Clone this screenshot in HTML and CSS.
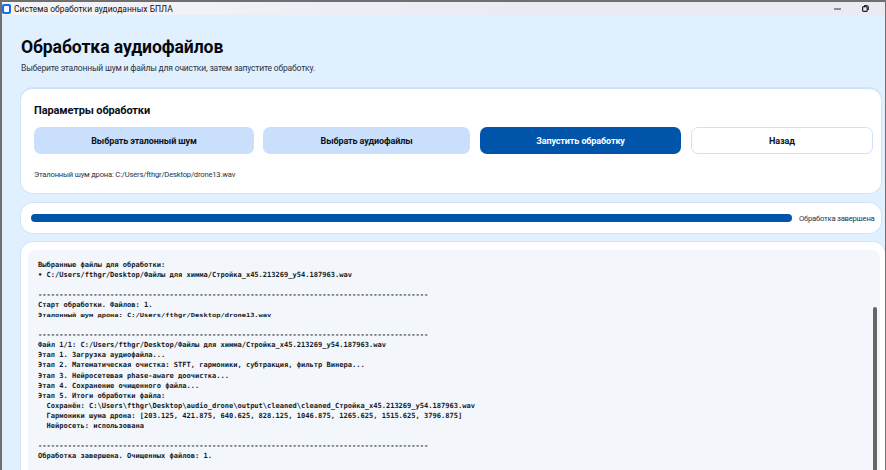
FILE: index.html
```html
<!DOCTYPE html>
<html lang="ru">
<head>
<meta charset="utf-8">
<title>Система обработки аудиоданных БПЛА</title>
<link rel="stylesheet" href="styles.css">
</head>
<body>
<div class="window">
  <header class="titlebar">
    <svg class="app-icon" width="9" height="10" viewBox="0 0 9 10"><rect x="0" y="0" width="9" height="10" rx="2" fill="#1a6fe0"/><rect x="2" y="2" width="5" height="6" rx="1" fill="#fff"/></svg>
    <span class="app-title">Система обработки аудиоданных БПЛА</span>
    <div class="win-controls">
      <svg width="7" height="2" viewBox="0 0 7 2"><rect width="7" height="1" y="0.5" fill="#333"/></svg>
      <svg width="7" height="7" viewBox="0 0 7 7"><rect x="0.6" y="1.6" width="4.6" height="4.8" rx="1" fill="none" stroke="#222" stroke-width="1.2"/><path d="M2 .6h3.4a1 1 0 0 1 1 1V5" fill="none" stroke="#222"/></svg>
    </div>
  </header>
  <main class="content">
    <h1 class="page-title">Обработка аудиофайлов</h1>
    <p class="page-sub">Выберите эталонный шум и файлы для очистки, затем запустите обработку.</p>
    <section class="card params">
      <h2 class="card-title">Параметры обработки</h2>
      <div class="buttons">
        <button class="btn btn-light b1">Выбрать эталонный шум</button>
        <button class="btn btn-light b2">Выбрать аудиофайлы</button>
        <button class="btn btn-primary b3">Запустить обработку</button>
        <button class="btn btn-ghost b4">Назад</button>
      </div>
      <p class="noise-path">Эталонный шум дрона: C:/Users/fthgr/Desktop/drone13.wav</p>
    </section>
    <section class="card progress-card">
      <div class="bar"></div>
      <span class="status">Обработка завершена</span>
    </section>
    <section class="card log-card">
      <div class="log-box">
<pre class="log">Выбранные файлы для обработки:
• C:/Users/fthgr/Desktop/Файлы для химма/Стройка_x45.213269_y54.187963.wav

--------------------------------------------------------------------------------------------
Старт обработки. Файлов: 1.
<span class="squash">Эталонный шум дрона: C:/Users/fthgr/Desktop/drone13.wav</span>

--------------------------------------------------------------------------------------------
Файл 1/1: C:/Users/fthgr/Desktop/Файлы для химма/Стройка_x45.213269_y54.187963.wav
Этап 1. Загрузка аудиофайла...
Этап 2. Математическая очистка: STFT, гармоники, субтракция, фильтр Винера...
Этап 3. Нейросетевая phase-aware доочистка...
Этап 4. Сохранение очищенного файла...
Этап 5. Итоги обработки файла:
  Сохранён: C:\Users\fthgr\Desktop\audio_drone\output\cleaned\cleaned_Стройка_x45.213269_y54.187963.wav
  Гармоники шума дрона: [203.125, 421.875, 640.625, 828.125, 1046.875, 1265.625, 1515.625, 3796.875]
  Нейросеть: использована

--------------------------------------------------------------------------------------------
Обработка завершена. Очищенных файлов: 1.</pre>
        <div class="scrollbar"></div>
      </div>
    </section>
  </main>
</div>
</body>
</html>
```
FILE: styles.css
```css
* { box-sizing: border-box; }
html, body { margin: 0; height: 100%; overflow: hidden; }
body { font-family: Roboto, "Noto Sans", sans-serif; color: #0b1220; background: #fff; }
.window {
  width: 886px; height: 470px; display: flex; flex-direction: column;
  border-top: 2px solid #6f6f6f; border-left: 2px solid #6f6f6f; border-right: 1px solid #6f6f6f;
  overflow: hidden; background: #e1f0fe;
}
.titlebar {
  height: 13px; flex: none; display: flex; align-items: center;
  background: linear-gradient(90deg, #f4f5f9, #e8ebf4 60%);
}
.app-icon { flex: none; }
.app-title { margin-left: 3px; font-size: 8.5px; color: #111; white-space: nowrap; }
.win-controls { margin-left: auto; display: flex; align-items: center; gap: 21px; padding-right: 16px; }
.content { flex: 1; min-height: 0; padding: 0 0 0 19px; overflow: hidden; }
.page-title { margin: 21px 0 0; font-size: 17.6px; line-height: 22px; font-weight: 700; color: #060a12; letter-spacing: -0.1px; }
.page-sub { margin: 4px 0 0; font-size: 8.5px; line-height: 13px; color: #2a3446; letter-spacing: -0.17px; }
.card { background: #fff; border-radius: 12px; width: 860px; box-shadow: 0 0 0 1px #d2e4fb; }
.params { margin-top: 13px; height: 105px; padding: 15px 8px 0 13px; border-top: 1px solid #cde2fb; }
.card-title { margin: 0; font-size: 11px; line-height: 14px; font-weight: 700; color: #0a0f18; letter-spacing: -0.13px; }
.buttons { display: flex; margin-top: 9px; height: 27px; }
.btn {
  height: 27px; border-radius: 7px; border: 0; font-family: inherit; font-size: 9px; font-weight: 700;
  color: #0b1220; padding: 0; letter-spacing: -0.1px;
}
.btn-light { background: #c9dffb; }
.btn-primary { background: #0054aa; color: #fff; }
.btn-ghost { background: #fff; border: 1px solid #cfe2fb; }
.b1 { width: 220px; }
.b2 { width: 207px; margin-left: 9px; }
.b3 { width: 201px; margin-left: 10px; }
.b4 { width: 182px; margin-left: 10px; }
.noise-path { margin: 15px 0 0; font-size: 7.6px; line-height: 11px; color: #2a3446; letter-spacing: -0.18px; }
.progress-card { margin-top: 10px; height: 30px; padding: 0 5px 0 10px; display: flex; align-items: center; }
.bar { width: 761px; height: 8px; border-radius: 4px; background: #0054aa; flex: none; }
.status { margin-left: 7px; font-size: 7.7px; color: #2a3446; white-space: nowrap; letter-spacing: -0.25px; }
.log-card { margin-top: 9px; width: 864px; height: 240px; padding: 8px 5px 0 7px; border-radius: 12px 12px 0 0; }
.log-box { position: relative; height: 232px; background: #f3f7fb; border-radius: 8px 8px 0 0; padding: 10px 0 0 10px; overflow: hidden; }
.log {
  margin: 0; font-family: "DejaVu Sans Mono", "Liberation Mono", monospace; font-size: 7.06px; line-height: 10.05px;
  font-weight: 700; color: #141b28; white-space: pre;
}
.squash { display: inline-block; transform: scaleY(0.8); }
.scrollbar { position: absolute; right: 3px; top: 57px; width: 4px; height: 180px; border-radius: 2px; background: #666; }
```
